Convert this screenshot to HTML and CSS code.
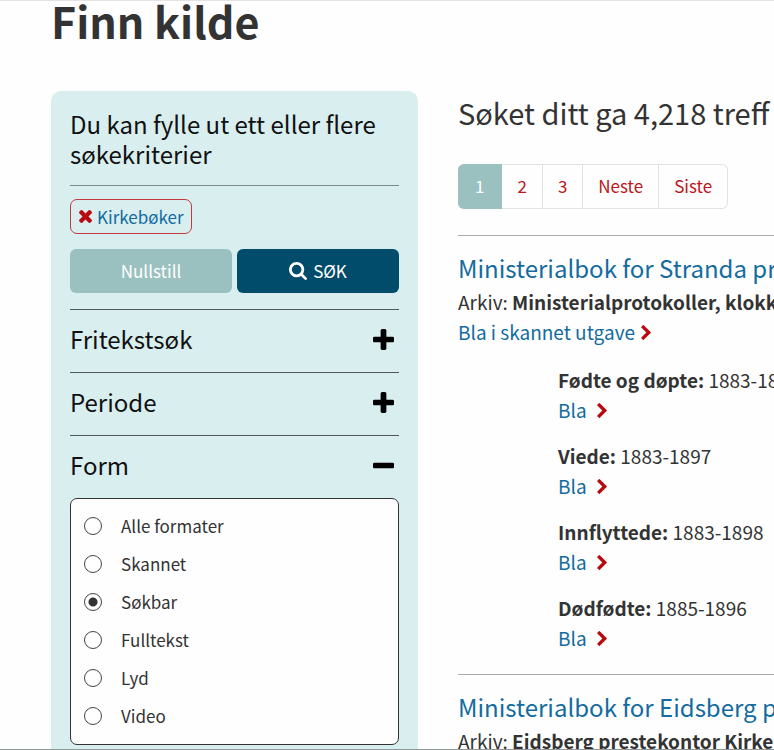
FILE: index.html
```html
<!DOCTYPE html>
<html lang="no">
  <head>
    <meta charset="UTF-8" />
    <meta name="viewport" content="width=device-width, initial-scale=1.0" />
    <title>Finn kilde</title>
    <link rel="stylesheet" href="styles.css">
  </head>
  <body>
    <svg class="sprite" aria-hidden="true">
      <symbol id="plus" viewBox="192 128 1408 1408"><path d="M1600 736v192q0 40-28 68t-68 28h-416v416q0 40-28 68t-68 28h-192q-40 0-68-28t-28-68v-416h-416q-40 0-68-28t-28-68v-192q0-40 28-68t68-28h416v-416q0-40 28-68t68-28h192q40 0 68 28t28 68v416h416q40 0 68 28t28 68z"/></symbol>
      <symbol id="minus" viewBox="192 128 1408 1408"><path d="M1600 736v192q0 40-28 68t-68 28h-1216q-40 0-68-28t-28-68v-192q0-40 28-68t68-28h1216q40 0 68 28t28 68z"/></symbol>
      <symbol id="times" viewBox="302 366 1188 1188"><path d="M1490 1322q0 40-28 68l-136 136q-28 28-68 28t-68-28l-294-294-294 294q-28 28-68 28t-68-28l-136-136q-28-28-28-68t28-68l294-294-294-294q-28-28-28-68t28-68l136-136q28-28 68-28t68 28l294 294 294-294q28-28 68-28t68 28l136 136q28 28 28 68t-28 68l-294 294 294 294q28 28 28 68z"/></symbol>
      <symbol id="search" viewBox="64 128 1664 1664"><path d="M1216 832q0-185-131.5-316.5t-316.5-131.5-316.5 131.5-131.5 316.5 131.5 316.5 316.5 131.5 316.5-131.5 131.5-316.5zm512 832q0 52-38 90t-90 38q-54 0-90-38l-343-342q-179 124-399 124-143 0-273.5-55.5t-225-150-150-225-55.5-273.5 55.5-273.5 150-225 225-150 273.5-55.5 273.5 55.5 225 150 150 225 55.5 273.5q0 220-124 399l343 343q37 37 37 90z"/></symbol>
      <symbol id="chevron" viewBox="346 26 1036 1612"><path d="M1363 877l-742 742q-19 19-45 19t-45-19l-166-166q-19-19-19-45t19-45l531-531-531-531q-19-19-19-45t19-45l166-166q19-19 45-19t45 19l742 742q19 19 19 45t-19 45z"/></symbol>
    </svg>

    <h1>Finn kilde</h1>

    <div class="columns">
      <form class="filter">
        <h2 class="filter-title">Du kan fylle ut ett eller flere søkekriterier</h2>
        <div class="filter-actions">
          <a class="tag" href="#"><svg class="icon-times"><use href="#times"/></svg>Kirkebøker</a>
          <div class="buttons">
            <button class="btn btn-reset" type="reset">Nullstill</button>
            <button class="btn btn-search" type="submit"><svg class="icon-search"><use href="#search"/></svg>SØK</button>
          </div>
        </div>

        <button class="section" type="button" aria-expanded="false">Fritekstsøk<svg class="icon-toggle"><use href="#plus"/></svg></button>
        <button class="section" type="button" aria-expanded="false">Periode<svg class="icon-toggle"><use href="#plus"/></svg></button>
        <button class="section" type="button" aria-expanded="true">Form<svg class="icon-toggle"><use href="#minus"/></svg></button>
        <div class="options">
          <label class="option"><input type="radio" name="form">Alle formater</label>
          <label class="option"><input type="radio" name="form">Skannet</label>
          <label class="option"><input type="radio" name="form" checked>Søkbar</label>
          <label class="option"><input type="radio" name="form">Fulltekst</label>
          <label class="option"><input type="radio" name="form">Lyd</label>
          <label class="option"><input type="radio" name="form">Video</label>
        </div>
      </form>

      <main class="results">
        <h2 class="results-title">Søket ditt ga 4,218 treff</h2>
        <nav class="pagination">
          <a class="page active" href="#">1</a>
          <a class="page" href="#">2</a>
          <a class="page" href="#">3</a>
          <a class="page" href="#">Neste</a>
          <a class="page" href="#">Siste</a>
        </nav>

        <article class="result">
          <h3><a href="#">Ministerialbok for Stranda prestegjeld</a></h3>
          <p>Arkiv: <b>Ministerialprotokoller, klokkerbøker</b></p>
          <p><a class="browse" href="#">Bla i skannet utgave<svg class="icon-chevron"><use href="#chevron"/></svg></a></p>
          <ul class="parts">
            <li>
              <p><b>Fødte og døpte:</b> 1883-1898</p>
              <p><a class="browse browse-part" href="#">Bla<svg class="icon-chevron"><use href="#chevron"/></svg></a></p>
            </li>
            <li>
              <p><b>Viede:</b> 1883-1897</p>
              <p><a class="browse browse-part" href="#">Bla<svg class="icon-chevron"><use href="#chevron"/></svg></a></p>
            </li>
            <li>
              <p><b>Innflyttede:</b> 1883-1898</p>
              <p><a class="browse browse-part" href="#">Bla<svg class="icon-chevron"><use href="#chevron"/></svg></a></p>
            </li>
            <li>
              <p><b>Dødfødte:</b> 1885-1896</p>
              <p><a class="browse browse-part" href="#">Bla<svg class="icon-chevron"><use href="#chevron"/></svg></a></p>
            </li>
          </ul>
        </article>

        <article class="result">
          <h3><a href="#">Ministerialbok for Eidsberg prestegjeld</a></h3>
          <p>Arkiv: <b>Eidsberg prestekontor Kirkebøker</b></p>
        </article>
      </main>
    </div>
  </body>
</html>
```
FILE: styles.css
```css
* {
  box-sizing: border-box;
}

body {
  margin: 0;
  height: 100vh;
  padding-left: 51px;
  overflow: hidden;
  border-top: 1px solid #e3e3e3;
  border-bottom: 1px solid #8f9797;
  background: #fefefe;
  color: #333;
  font-family: "Noto Sans CJK JP", "Noto Sans", sans-serif;
  font-size: 19px;
  line-height: 30px;
}

h1, h2, h3, p, ul {
  margin: 0;
  padding: 0;
  font-weight: normal;
}

ul {
  list-style: none;
}

a {
  color: #136ba0;
  text-decoration: none;
}

button {
  font: inherit;
  border: none;
  cursor: pointer;
}

svg {
  fill: currentColor;
  flex: none;
}

.sprite {
  display: none;
}

h1 {
  font-size: 43px;
  line-height: 38px;
  font-weight: bold;
}

.columns {
  display: flex;
  align-items: flex-start;
  gap: 40px;
  margin-top: 52px;
}

/* filter */
.filter {
  flex: 0 0 367px;
  padding: 18px 19px 20px;
  border-radius: 10px;
  background: #d9eeee;
}

.filter-title {
  padding-bottom: 16px;
  border-bottom: 1px solid #7d8a8a;
  font-size: 24px;
  color: #111;
}

.filter-actions {
  padding: 13px 0 16px;
}

.tag {
  display: inline-flex;
  align-items: center;
  gap: 5px;
  height: 35px;
  padding: 0 7px 0 8px;
  border: 1px solid #c5393c;
  border-radius: 7px;
  font-size: 17px;
  vertical-align: top;
}

.icon-times {
  width: 13px;
  height: 13px;
  color: #b7090f;
}

.buttons {
  display: flex;
  gap: 5px;
  margin-top: 15px;
}

.btn {
  display: flex;
  flex: 1;
  justify-content: center;
  align-items: center;
  gap: 6px;
  height: 44px;
  border-radius: 6px;
  color: #fff;
  font-size: 17px;
}

.btn-reset {
  background: #9ac1c0;
}

.btn-search {
  background: #024c6b;
}

.icon-search {
  width: 18px;
  height: 18px;
}

.section {
  display: flex;
  justify-content: space-between;
  align-items: center;
  width: 100%;
  height: 63px;
  padding: 0 5px 4px 0;
  border-top: 1px solid #4f5858;
  background: none;
  color: #111;
  font-size: 24px;
}

.icon-toggle {
  width: 21px;
  height: 21px;
  color: #000;
}

.options {
  padding: 8px 13px 9px;
  border: 1px solid #333;
  border-radius: 7px;
  background: #fefefe;
}

.option {
  display: flex;
  align-items: center;
  gap: 19px;
  height: 38px;
  font-size: 17px;
}

.option input {
  appearance: none;
  width: 18px;
  height: 18px;
  margin: 0;
  border: 1px solid #444;
  border-radius: 50%;
  background: #fff;
}

.option input:checked {
  background: radial-gradient(circle, #333 4px, #fff 5px);
}

/* results */
.results {
  flex: 1;
  min-width: 0;
  padding-top: 3px;
  overflow: hidden;
  white-space: nowrap;
}

.results-title {
  font-size: 29px;
  line-height: 36px;
}

.pagination {
  display: flex;
  margin: 34px 0 26px;
  font-size: 17px;
}

.page {
  padding: 6px 15px 7px;
  border: 1px solid #e2e2e2;
  border-left: none;
  color: #bb1520;
}

.page:first-child {
  border-radius: 6px 0 0 6px;
}

.page:last-child {
  border-radius: 0 6px 6px 0;
}

.page.active {
  padding: 6px 17px 7px;
  border-color: #9ac1c0;
  background: #9ac1c0;
  color: #fff;
}

.result {
  padding: 14px 0 21px;
  border-top: 1px solid #aaa;
}

.result h3 {
  margin-bottom: 2px;
  font-size: 24px;
  line-height: 35px;
}

.browse {
  display: inline-flex;
  align-items: center;
  gap: 6px;
  vertical-align: top;
}

.browse-part {
  gap: 10px;
}

.icon-chevron {
  width: 10px;
  height: 15px;
  color: #b7090f;
}

.parts {
  display: grid;
  gap: 16px;
  margin-top: 18px;
  padding-left: 100px;
}
```
